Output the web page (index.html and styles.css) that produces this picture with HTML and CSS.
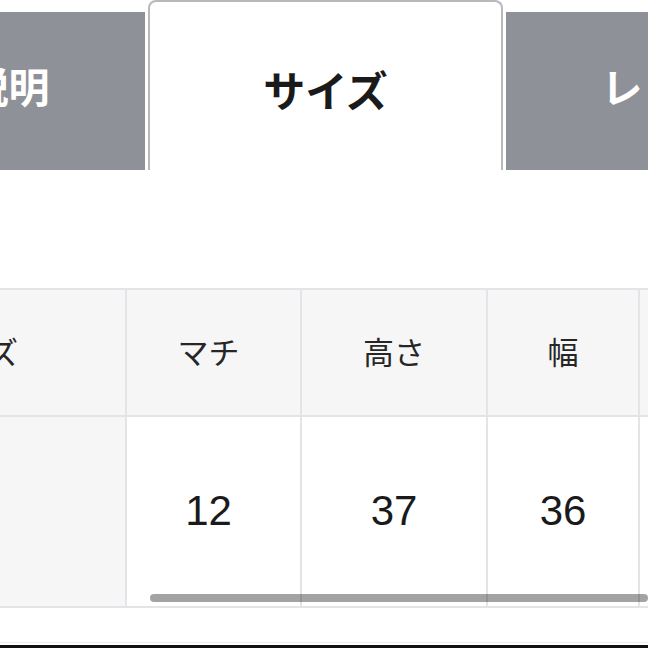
FILE: index.html
```html
<!DOCTYPE html>
<html lang="ja">

<head>
    <meta charset="UTF-8">
    <meta name="viewport" content="width=device-width, initial-scale=1.0">
    <title>サイズ</title>
    <link rel="stylesheet" href="styles.css">
</head>

<body>
    <div class="page">
        <div class="tabs">
            <div class="tab">商品説明</div>
            <div class="tab active">サイズ</div>
            <div class="tab">レビュー</div>
        </div>

        <div class="table-wrap">
            <div class="size-table">
                <div class="cell head">サイズ</div>
                <div class="cell head shift">マチ</div>
                <div class="cell head">高さ</div>
                <div class="cell head">幅</div>
                <div class="cell head">持ち手</div>

                <div class="cell label"></div>
                <div class="cell num shift">12</div>
                <div class="cell num">37</div>
                <div class="cell num">36</div>
                <div class="cell num">50</div>
            </div>
            <div class="scrollbar"></div>
        </div>

        <div class="bottom-line"></div>
        <div class="bottom-bar"></div>
    </div>
</body>

</html>
```

FILE: styles.css
```css
* {
    box-sizing: border-box;
    margin: 0;
    padding: 0;
}

body {
    width: 648px;
    height: 648px;
    overflow: hidden;
    background: #fff;
    font-family: "Noto Sans CJK JP", "Noto Sans", sans-serif;
    color: #1e1e1e;
}

.page {
    width: 648px;
    height: 648px;
    overflow: hidden;
    display: flex;
    flex-direction: column;
}

.tabs {
    display: flex;
    gap: 3px;
    margin-left: -210px;
    height: 170px;
    align-items: flex-end;
}

.tab {
    flex: 0 0 355px;
    height: 158px;
    background: #8f9198;
    color: #fff;
    font-size: 41px;
    font-weight: bold;
    display: flex;
    justify-content: center;
    align-items: center;
    padding-bottom: 12px;
}

.tab.active {
    height: 170px;
    background: #fff;
    color: #1a1a1a;
    border: 2px solid #b9b9bc;
    border-bottom: none;
    border-radius: 8px 8px 0 0;
    align-items: flex-start;
    padding-bottom: 0;
    padding-top: 56px;
    font-size: 42px;
}

.table-wrap {
    position: relative;
    margin-top: 118px;
    margin-left: -181px;
}

.size-table {
    display: grid;
    grid-template-columns: 306px 173px 184px 150px 220px;
    grid-template-rows: 125px 189px;
    gap: 2px;
    padding: 2px 0;
    background: #e4e4e8;
    width: max-content;
}

.cell {
    display: flex;
    justify-content: center;
    align-items: center;
    background: #fff;
}

.head {
    background: #f6f6f7;
    font-size: 31px;
    color: #262626;
    padding-bottom: 4px;
}

.label {
    background: #f6f6f7;
}

.num {
    font-family: "Liberation Sans", Arial, sans-serif;
    font-size: 42px;
    color: #1a1a1a;
    padding-bottom: 2px;
}

.shift {
    padding-right: 10px;
}

.scrollbar {
    position: absolute;
    left: 331px;
    right: 0;
    bottom: 6px;
    height: 8px;
    border-radius: 4px;
    background: rgba(0, 0, 0, 0.36);
}

.bottom-line {
    margin-top: 34px;
    height: 1px;
    background: #ececee;
}

.bottom-bar {
    margin-top: 2px;
    height: 4px;
    background: #111;
}
```
